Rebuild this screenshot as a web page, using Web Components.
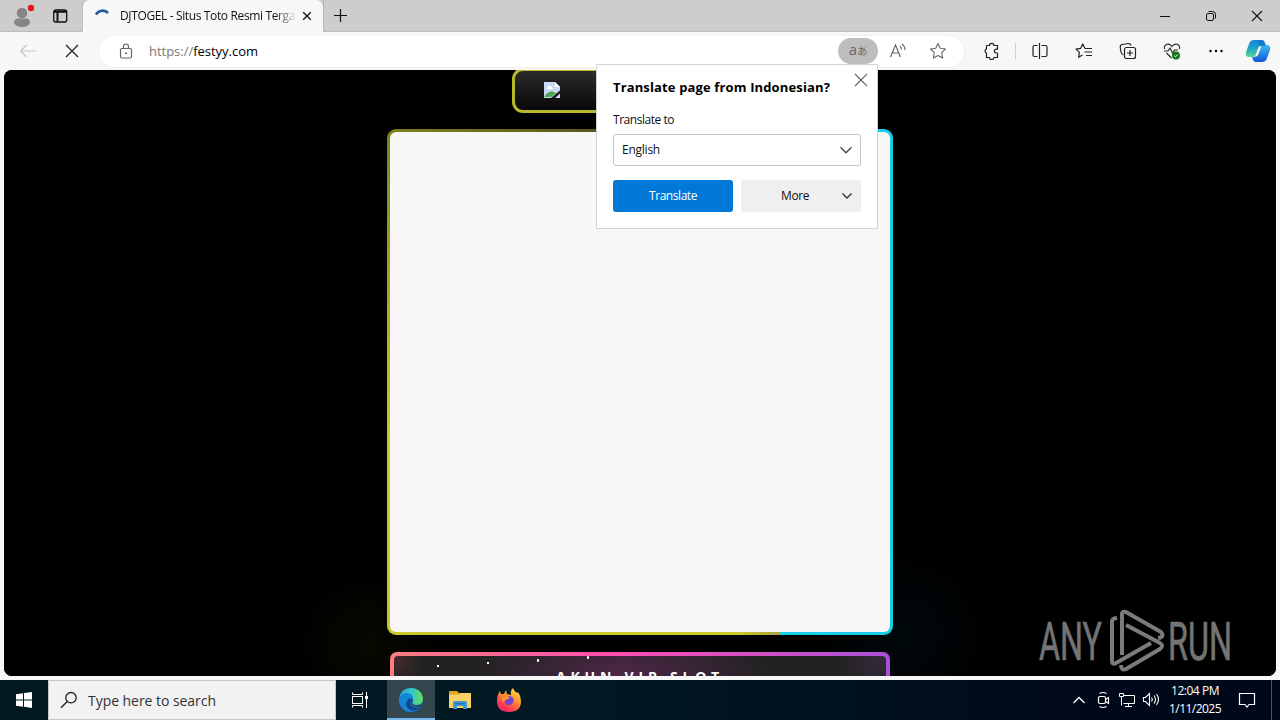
<!DOCTYPE html>
<html lang="en">
<head>
<meta charset="utf-8">
<title>DJTOGEL</title>
<style>
   html, body { margin: 0; height: 100%; overflow: hidden; }
   body { font-family: "Open Sans", "Noto Sans", "Noto Sans CJK JP", sans-serif; font-size: 12px; color: #111; }
</style>
</head>
<body>
<desktop-screen>
   <browser-window>
      <tab-strip slot="tabs"></tab-strip>
      <tool-bar slot="tools"></tool-bar>
      <page-view></page-view>
      <translate-bubble slot="bubble"></translate-bubble>
   </browser-window>
   <task-bar slot="taskbar"></task-bar>
</desktop-screen>

<script>
const icons = {
   profile: [24, 24, `<circle cx="12" cy="9" r="5.3" fill="#858585"/><path d="M4 19q0-4.5 4-4.5h8q4 0 4 4.500q-2 4-8 4t-8-4z" fill="#858585"/><circle cx="21" cy="4" r="3.200" fill="#e5121c"/>`],
   workspace: [16, 16, `<rect x="1.700" y="2" width="13" height="12" rx="2" stroke="#111" stroke-width="1.300" fill="none"/><path d="M2 3.700h12.500M5.500 4v9.500" stroke="#111" stroke-width="2"/>`],
   spinner: [18, 18, `<path d="M2 7.500A7.500 7.500 0 0 1 14 6" stroke="#1c5b9c" stroke-width="2.600" fill="none"/>`],
   tabclose: [10, 10, `<path d="M1.200 1.200l7.600 7.600M8.800 1.200l-7.600 7.600" stroke="#111" stroke-width="1.300"/>`],
   plus: [14, 14, `<path d="M6.500 0v13M0 6.500h13" stroke="#111" stroke-width="1.200"/>`],
   minimize: [10, 10, `<path d="M0 5.500h10" stroke="#111"/>`],
   restore: [12, 12, `<rect x="1.500" y="3.500" width="7" height="7" rx="1.500" stroke="#111" fill="none"/><path d="M3.500 1.500h4q3 0 3 3v4" stroke="#111" fill="none"/>`],
   close: [12, 12, `<path d="M1 1l10 10M11 1L1 11" stroke="#111" stroke-width="1.100"/>`],
   back: [18, 14, `<path d="M17 7H1.500M7.500 1L1.500 7l6 6" stroke="#c6c6c6" stroke-width="1.200" fill="none"/>`],
   stop: [14, 14, `<path d="M1 1l12 12M13 1L1 13" stroke="#222" stroke-width="1.300"/>`],
   lock: [14, 16, `<rect x="1.500" y="5.500" width="11" height="9.500" rx="1.500" stroke="#666" stroke-width="1.200" fill="none"/><path d="M4.500 5V3.500a2.500 2.500 0 0 1 5 0V5" stroke="#666" stroke-width="1.200" fill="none"/><circle cx="7" cy="10.300" r="1" fill="#666"/>`],
   readaloud: [18, 16, `<path d="M1.500 14L6.500 2l5 12M3.200 10h6.600" stroke="#666" stroke-width="1.200" fill="none"/><path d="M11 3q1.500 1 1.500 3.500M13 1q3 2 3 6" stroke="#666" stroke-width="1.100" fill="none"/>`],
   star: [18, 18, `<path d="M9 1.500l2.300 4.800 5.200.7-3.800 3.700.9 5.300L9 13.500 4.400 16l.9-5.300L1.500 7l5.200-.7z" stroke="#666" stroke-width="1.100" fill="none" stroke-linejoin="round"/>`],
   puzzle: [18, 18, `<path d="M4.500 3.500h3a2.200 2.200 0 0 1 4.400 0h3.600v3.700h-1.200a1.900 1.900 0 0 0 0 3.800h1.200v4.500h-3.600a2.200 2.200 0 0 1-4.400 0h-3v-4.200a2.400 2.400 0 0 1 0-4.400z" stroke="#222" stroke-width="1.200" fill="none" stroke-linejoin="round"/>`],
   split: [18, 18, `<path d="M6.500 3.500h-3q-1.500 0-1.500 1.500v8q0 1.500 1.500 1.500h3M10.500 3.500h4q1.500 0 1.500 1.500v8q0 1.500-1.500 1.500h-4M8.500 1v16" stroke="#222" stroke-width="1.200" fill="none"/>`],
   favorites: [18, 18, `<path d="M10 6.500L7.700 2 5.600 6.400l-4.600.7 3.400 3.300-.8 4.900 3.900-2.200M10 6.500h7M9.500 10h7.500M11 13.500h6" stroke="#222" stroke-width="1.200" fill="none" stroke-linejoin="round"/>`],
   collections: [18, 18, `<path d="M4.500 13Q2.500 12.500 2 10L1.200 5Q1 3 3 2.500L9.500 1.500q2 0 2.500 2" stroke="#222" stroke-width="1.200" fill="none"/><rect x="5.500" y="5.500" width="11" height="11" rx="2" stroke="#222" stroke-width="1.200" fill="none"/><path d="M11 8v6M8 11h6" stroke="#222" stroke-width="1.200"/>`],
   health: [18, 18, `<path d="M1.500 7Q.8 3.500 4 2.300 7 1.500 9 4.500 11 1.500 14 2.300q3.200 1.200 2.500 4.700M3.500 11l5 5M1 9h4l2-3 2.500 5 2-3H15" stroke="#222" stroke-width="1.100" fill="none"/><circle cx="13" cy="13.500" r="4" fill="#16771b"/><path d="M11.200 13.600l1.300 1.200 2.300-2.300" stroke="#fff" fill="none"/>`],
   dots: [16, 16, `<circle cx="2.500" cy="8" r="1.200"/><circle cx="8" cy="8" r="1.200"/><circle cx="13.500" cy="8" r="1.200"/>`],
   copilot: [26, 24, `<defs><linearGradient id="a" x2="0" y2="1"><stop stop-color="#1682d8"/><stop offset=".5" stop-color="#20a5c8"/><stop offset="1" stop-color="#57d48f"/></linearGradient><linearGradient id="b" x2="0" y2="1"><stop stop-color="#38bdf0"/><stop offset="1" stop-color="#1456d8"/></linearGradient></defs>
      <path d="M9 1h8q2 0 3 3l1 3h-4q-3 0-4 3l-2 6q-1 2-4 2H4q-4 0-3-5L4 5q1-4 5-4z" fill="url(#a)"/><path d="M20 6h2q4 0 3 5l-3 8q-1 4-5 4h-6q-3 0-4-5 3 1 4-2l3-7q1-3 6-3z" fill="url(#b)"/><path d="M7 1h10q2 0 3 4l.5 2H17q-3 0-4-6z" fill="#1579d4"/><path d="M13.500 8.500q1-1.500 3-1.500l-3.500 9q-.5 1.500-3 1.500z" fill="#f7f7f7"/>`],
   dismiss: [14, 14, `<path d="M1 1l12 12M13 1L1 13" stroke="#666" stroke-width="1.100"/>`],
   down: [14, 8, `<path d="M1.500 1.200L7 6.800l5.500-5.600" stroke="#444" stroke-width="1.300" fill="none"/>`],
   downsmall: [12, 8, `<path d="M1.500 1.500L6 6l4.500-4.500" stroke="#333" stroke-width="1.400" fill="none"/>`],
   broken: [16, 16, `<path d="M0 0h11l5 5v11H0z" fill="#c9d8f3"/><path d="M11 0v5h5z" fill="#fff"/><path d="M3 7q0-3 3-3 2 0 2 2h1v1z" fill="#fff"/><path d="M0 15q5-7 10-5l2 1-5 4z" fill="#4ca84a"/><path d="M16 8.500v3L11 16H7z" fill="#1b1b1b"/><path d="M16 12v4h-4z" fill="#d5dff2"/>`],
   windows: [16, 16, `<path d="M0 2.300L7 1.300v6.200H0zM8 1.100L16 0v7.500H8zM0 8.500h7v6.200l-7-1zM8 8.500h8V16l-8-1.200z" fill="#fff"/>`],
   search: [18, 18, `<circle cx="11" cy="6.700" r="5.200" stroke="#222" stroke-width="1.300" fill="none"/><path d="M7.300 10.400L1 16.700" stroke="#222" stroke-width="1.400"/>`],
   taskview: [18, 18, `<path d="M1.500 1.500v2h10v-2M1.500 16.500v-2h10v2M15.500 1v16" stroke="#fff" fill="none"/><rect x="1.500" y="5.500" width="10" height="7" stroke="#fff" fill="none"/><path d="M14 5h3v3h-3z" fill="#fff"/>`],
   edge: [24, 24, `<defs><linearGradient id="c"><stop stop-color="#25a6e3"/><stop offset=".55" stop-color="#33c9c4"/><stop offset="1" stop-color="#6fdc4e"/></linearGradient></defs>
      <circle cx="12" cy="12" r="12" fill="#1475c6"/><path d="M0 11Q2 0 12 0t12 10q0 6-6 7-4 0-5-2 2-2 1-5-2-4-7-4-5 1-7 5z" fill="url(#c)"/><path d="M0 11Q2 5 8 5t6 6q-3-2-5 1-3 6 3 10l1 2Q1 24 0 11z" fill="#1586d6"/><path d="M9 11.500q-4 5 0 9 6 5 13-2-7 3-10-1-2-3 1-6-2-2-4 0z" fill="#10498a"/><path d="M13 11q-2 2-1 5 3 4 9.500 2.300l.8.200 1.700-3q-3 2-6 1.500-4 0-5-2 1.500-1.500 0-4z" fill="#34474f"/>`],
   folder: [22, 20, `<path d="M0 2q0-1 1-1h7l2 2h11v15H0z" fill="#e5a51f"/><path d="M0 4.500h10l1.500-1.500H22V18H0z" fill="#f8d267"/><path d="M4 19v-6q0-2 2-2h10q2 0 2 2v6h-4v-3H8v3z" fill="#3f97d5"/><path d="M6 13h10v1.500H6z" fill="#2276b5"/>`],
   firefox: [24, 24, `<defs><linearGradient id="e" x1=".8" y1="0" x2=".2" y2="1"><stop stop-color="#ffe23e"/><stop offset=".45" stop-color="#ff8a2a"/><stop offset=".75" stop-color="#ff3e52"/><stop offset="1" stop-color="#e91d78"/></linearGradient></defs>
      <path d="M3 3l1 3 3 0 2-4 1 4 4 1q-1-5 2-7 1 3 4 5l1-1q3 4 3 9 0 11-12 11T0 13Q0 7 3 3z" fill="url(#e)"/><circle cx="12" cy="12.500" r="4.600" fill="#7443d2"/><path d="M5 10q4-3 8-.5l-3 2q-3 .5-3 3-2-1-2-4.500z" fill="#ff982e"/>`],
   chevronup: [14, 8, `<path d="M1.500 7L7 1.500 12.500 7" stroke="#fff" stroke-width="1.300" fill="none"/>`],
   camera: [14, 18, `<rect x="2.500" y="5.500" width="7" height="7" rx="1.500" stroke="#fff" stroke-width="1.200" fill="none"/><path d="M9.500 8.500l3-2v6l-3-2M3.500 2.500q3.500-2 7 0M3.500 15.500q3.500 2 7 0" stroke="#fff" stroke-width="1.200" fill="none"/>`],
   network: [18, 16, `<path d="M5.500 3.500h11v8h-11M10.500 11.500v3M7 14.500h7M1.500 1.500h4v3h-4zM3.500 4.500v9" stroke="#fff" fill="none"/>`],
   volume: [18, 16, `<path d="M1.500 5.500h2l4-4v12l-4-4h-2zM9.500 5.500q1.500 2 0 4M12 3.500q3 4 0 8M14.500 2q4 5.500 0 11" stroke="#fff" stroke-width="1.100" fill="none"/>`],
   notice: [18, 18, `<path d="M1.500 2.500h15v11H11l-2 2.500-2-2.500H1.500z" stroke="#fff" stroke-width="1.200" fill="none"/>`]
}

class UiIcon extends HTMLElement {
   connectedCallback() {
      const [w, h, shape] = icons[this.getAttribute('name')]
      this.attachShadow({ mode: 'open' }).innerHTML =
      `<style>
         :host { display: block; flex: none; width: ${w}px; height: ${h}px; }
         svg { display: block; }
      </style>
      <svg width="${w}" height="${h}" viewBox="0 0 ${w} ${h}">${shape}</svg>`
   }
}

//one line of text, tracked so that it takes the given width
class UiLabel extends HTMLElement {
   connectedCallback() {
      this.attachShadow({ mode: 'open' }).innerHTML =
      `<style>
         :host { display: inline-block; width: fit-content; white-space: nowrap; line-height: 16px; }
      </style><slot></slot>`
      const natural = this.getBoundingClientRect().width
      const width = Number(this.getAttribute('width'))
      if (width) this.style.letterSpacing = (width - natural) / this.textContent.length + 'px'
   }
}

//helper for elements that are only markup and styles
const define = (name, html) => {
   const template = document.createElement('template')
   template.innerHTML = html
   customElements.define(name, class extends HTMLElement {
      constructor() {
         super()
         this.attachShadow({ mode: 'open' }).append(template.content.cloneNode(true))
      }
   })
}

define('icon-cell', `
   <style>
      :host { display: flex; flex: none; width: 44px; align-self: stretch; align-items: center; justify-content: center; }
   </style>
   <slot></slot>`)

define('desktop-screen', `
   <style>
      :host { display: grid; grid-template-rows: 680px 40px; width: 1280px; height: 720px; overflow: hidden; }
   </style>
   <slot></slot>
   <slot name="taskbar"></slot>`)

define('browser-window', `
   <style>
      :host { display: grid; grid-template-rows: 32px 38px 606px; background: #f7f7f7; position: relative; min-width: 0; }
      main { margin: 0 4px; border-radius: 8px; overflow: hidden; background: #000; }
   </style>
   <slot name="tabs"></slot>
   <slot name="tools"></slot>
   <main><slot></slot></main>
   <slot name="bubble"></slot>`)

define('tab-strip', `
   <style>
      :host { display: flex; background: #cdcdcd; box-shadow: inset 0 -1px #bdbdbd; }
      .left { display: flex; width: 82px; border-right: 1px solid #bdbdbd; border-bottom-right-radius: 6px; }
      .tab { display: flex; align-items: center; width: 240px; box-sizing: border-box; padding: 0 11px; background: #f7f7f7; border-radius: 7px 7px 0 0; }
      .title { flex: none; width: 175px; margin: 0 2px 0 8px; overflow: hidden; height: 16px;
         -webkit-mask-image: linear-gradient(90deg, #000 155px, transparent 177px); }
      .title ui-label { vertical-align: top; }
      .rest { display: flex; flex: 1; border-left: 1px solid #b5b5b5; border-bottom-left-radius: 6px; }
      .window { display: flex; margin-left: auto; }
      .window icon-cell { width: 46px; }
   </style>
   <div class="left">
      <icon-cell><ui-icon name="profile"></ui-icon></icon-cell>
      <icon-cell style="width: 32px"><ui-icon name="workspace"></ui-icon></icon-cell>
   </div>
   <div class="tab">
      <ui-icon name="spinner"></ui-icon>
      <div class="title"><ui-label width="175">DJTOGEL - Situs Toto Resmi Terga</ui-label></div>
      <ui-icon name="tabclose" style="margin-left: 5px"></ui-icon>
   </div>
   <div class="rest">
      <icon-cell style="width: 34px"><ui-icon name="plus"></ui-icon></icon-cell>
      <div class="window">
         <icon-cell><ui-icon name="minimize"></ui-icon></icon-cell>
         <icon-cell><ui-icon name="restore"></ui-icon></icon-cell>
         <icon-cell><ui-icon name="close"></ui-icon></icon-cell>
      </div>
   </div>`)

define('tool-bar', `
   <style>
      :host { display: flex; align-items: center; padding-left: 6px; }
      .address { display: flex; align-items: center; flex: none; width: 865px; height: 31px; margin: 0 5px; border-radius: 16px; background: #fff; box-shadow: 0 0 2px #e5e5e5; }
      .address > ui-icon { margin: 0 16px 0 20px; }
      .url { flex: 1; font-size: 13px; color: #000; }
      .url span { color: #777; }
      .pill { flex: none; display: flex; align-items: center; justify-content: center; width: 40px; height: 26px; border-radius: 13px; background: #bdbdbd; color: #666; font-size: 15px; line-height: 20px; }
      .pill small { font-size: 10px; }
      .pill ui-label { line-height: 20px; margin-top: -2px; }
      .address icon-cell { width: 40px; }
      .rule { width: 1px; height: 16px; margin: 0 2px; background: #cfcfcf; }
   </style>
   <icon-cell><ui-icon name="back"></ui-icon></icon-cell>
   <icon-cell><ui-icon name="stop"></ui-icon></icon-cell>
   <div class="address">
      <ui-icon name="lock"></ui-icon>
      <div class="url"><ui-label width="109"><span>https://</span>festyy.com</ui-label></div>
      <div class="pill"><ui-label>a<small>あ</small></ui-label></div>
      <icon-cell><ui-icon name="readaloud"></ui-icon></icon-cell>
      <icon-cell style="margin-right: 6px"><ui-icon name="star"></ui-icon></icon-cell>
   </div>
   <icon-cell><ui-icon name="puzzle"></ui-icon></icon-cell>
   <div class="rule"></div>
   <icon-cell><ui-icon name="split"></ui-icon></icon-cell>
   <icon-cell><ui-icon name="favorites"></ui-icon></icon-cell>
   <icon-cell><ui-icon name="collections"></ui-icon></icon-cell>
   <icon-cell><ui-icon name="health"></ui-icon></icon-cell>
   <icon-cell><ui-icon name="dots"></ui-icon></icon-cell>
   <icon-cell style="width: 40px"><ui-icon name="copilot"></ui-icon></icon-cell>`)

define('page-view', `
   <style>
      :host { display: flex; flex-direction: column; align-items: center; height: 606px; overflow: hidden; position: relative;
         background: radial-gradient(circle 75px at 366px 575px, #080800, transparent), radial-gradient(circle 90px at 898px 565px, #00080b, transparent), #000; }
      .logo { flex: none; box-sizing: border-box; width: 256px; height: 45px; margin-top: -2px; padding: 11px 0 0 29px; border: 3px solid #b9b72b; border-radius: 11px; background: linear-gradient(#2b2b2b, #080808); }
      .card { flex: none; width: 500px; height: 500px; margin-top: 16px; padding: 3px; border-radius: 9px;
         background: linear-gradient(90deg, #c8c82b 70%, #b0a83a 76%, #b3a43a 77.400%, #19cde6 77.800%) bottom / 100% 9px no-repeat,
            linear-gradient(90deg, #80801f, #50501f 50%, #19cde6 80%) top / 100% 9px no-repeat,
            linear-gradient(#80801f, #c8c82b 60%) left / 50% 100% no-repeat, #19cde6; }
      .card div { height: 100%; border-radius: 6px; background: #f7f7f7; }
      .vip { flex: none; box-sizing: border-box; width: 500px; height: 50px; margin-top: 17px; padding: 4px; border-radius: 7px; background: linear-gradient(90deg, #ff7c80, #ff4eb0 45%, #a950d8); }
      .vip div { height: 46px; padding-top: 11px; box-sizing: border-box; border-radius: 4px 4px 0 0; text-align: center; color: #fff; font: bold 14px "Open Sans", sans-serif;
         background: radial-gradient(circle 1.500px at 44px 10px, #fff 70%, transparent), radial-gradient(circle 1.500px at 94px 7px, #fff 70%, transparent),
            radial-gradient(circle 1.500px at 144px 4.500px, #fff 70%, transparent), radial-gradient(circle 1.500px at 194px 1.500px, #fff 70%, transparent),
            radial-gradient(circle 30px at 0 0, #4a2c2e, transparent), radial-gradient(circle 50px at 100% 0, #362a3b, transparent),
            radial-gradient(ellipse 150px 60px at 228px 20px, #4d2748, transparent), #222; }
      svg { position: absolute; right: 40px; top: 535px; }
   </style>
   <div class="logo"><ui-icon name="broken"></ui-icon></div>
   <div class="card"><div></div></div>
   <div class="vip"><div><ui-label width="168">AKUN VIP SLOT</ui-label></div></div>
   <svg width="198" height="70" viewBox="1038 605 198 70" fill="#747474" font-family="Roboto" font-size="53">
      <g stroke="#747474" stroke-width=".7">
         <text x="1039" y="660" textLength="63" lengthAdjust="spacingAndGlyphs">ANY</text>
         <text x="1168" y="660" textLength="64" lengthAdjust="spacingAndGlyphs">RUN</text>
      </g>
      <g fill="none" stroke="#7b7b7b" stroke-width="4" stroke-linejoin="round">
         <path d="M1117 618l-3 .5q-2 1-2 3V661q0 4 4 2l35-20"/>
         <path d="M1122 655V614q0-3 4-2l35 20q4 5-3 6"/>
         <path d="M1126 625l34 18q4 3 0 6l-34 20q-5 2-5-4"/>
      </g>
   </svg>`)

define('translate-bubble', `
   <style>
      :host { display: block; position: absolute; left: 596px; top: 64px; box-sizing: border-box; width: 282px; height: 165px; padding: 14px 16px; border: 1px solid #d4d4d4; background: #fff; }
      ui-label { display: block; }
      h1 { display: flex; justify-content: space-between; margin: 0 -7px 16px 0; font-size: 13px; font-weight: 700; height: 17px; color: #000; }
      h1 ui-icon { margin-top: -6px; }
      .select, .actions, button { display: flex; align-items: center; box-sizing: border-box; height: 32px; border-radius: 3px; }
      .select { justify-content: space-between; margin: 6px 0 14px; padding: 0 7px 0 8px; border: 1px solid #c4c4c4; }
      .actions { gap: 8px; }
      button { position: relative; flex: 1; justify-content: center; padding: 0; border: 0; font: inherit; color: #111; background: #efefef; }
      .primary { background: #0078d7; color: #fff; }
      .more ui-label { margin-right: 12px; }
      .more ui-icon { position: absolute; right: 8px; }
   </style>
   <h1><ui-label width="217">Translate page from Indonesian?</ui-label><ui-icon name="dismiss"></ui-icon></h1>
   <ui-label width="61">Translate to</ui-label>
   <div class="select"><ui-label width="38">English</ui-label><ui-icon name="down"></ui-icon></div>
   <div class="actions">
      <button class="primary"><ui-label width="48">Translate</ui-label></button>
      <button class="more"><ui-label width="28">More</ui-label><ui-icon name="downsmall"></ui-icon></button>
   </div>`)

define('task-bar', `
   <style>
      :host { display: flex; align-items: stretch; background: linear-gradient(90deg, #001820, #001923 45%, #00091a 85%); color: #fff; }
      icon-cell { width: 24px; }
      .start { width: 48px; }
      .search { display: flex; align-items: center; gap: 10px; box-sizing: border-box; width: 288px; padding-left: 11px; background: #f2f2f2; border: 1px solid #c5c5c5; color: #333; font-size: 14px; }
      .search ui-label { padding-top: 2px; }
      .app { width: 49px; }
      .view { width: 47px; margin-right: 2px; }
      .active { width: 48px; box-sizing: border-box; margin-left: 2px; background: linear-gradient(#34474f 38px, #76b9ed 38px); }
      .tray { display: flex; margin-left: auto; width: 213px; }
      .clock { width: 64px; padding-top: 2px; text-align: center; }
      .clock ui-label { line-height: 18px; }
      .peek { width: 4px; border-left: 1px solid #4c5560; margin-left: 4px; }
   </style>
   <icon-cell class="start"><ui-icon name="windows"></ui-icon></icon-cell>
   <div class="search"><ui-icon name="search"></ui-icon><ui-label width="128">Type here to search</ui-label></div>
   <icon-cell class="view"><ui-icon name="taskview"></ui-icon></icon-cell>
   <icon-cell class="active"><ui-icon name="edge"></ui-icon></icon-cell>
   <icon-cell class="app"><ui-icon name="folder"></ui-icon></icon-cell>
   <icon-cell class="app"><ui-icon name="firefox"></ui-icon></icon-cell>
   <div class="tray">
      <icon-cell><ui-icon name="chevronup"></ui-icon></icon-cell>
      <icon-cell><ui-icon name="camera"></ui-icon></icon-cell>
      <icon-cell><ui-icon name="network"></ui-icon></icon-cell>
      <icon-cell><ui-icon name="volume"></ui-icon></icon-cell>
      <div class="clock"><ui-label width="48">12:04 PM</ui-label><ui-label width="52">1/11/2025</ui-label></div>
      <icon-cell style="width: 40px"><ui-icon name="notice"></ui-icon></icon-cell>
      <div class="peek"></div>
   </div>`)

customElements.define('ui-icon', UiIcon)
customElements.define('ui-label', UiLabel)
</script>
</body>
</html>
